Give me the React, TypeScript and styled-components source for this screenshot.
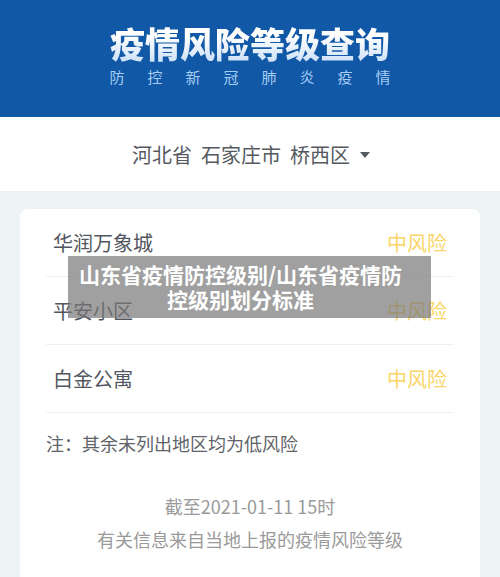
import React from "react"
import styled, { createGlobalStyle } from "styled-components"

const GlobalStyle = createGlobalStyle`
	body {
		margin: 0;
		background: #edf2f5;
		font-family: "Noto Sans CJK SC", "Noto Sans", sans-serif;
	}
`

const areas = [
	{ name: "华润万象城", level: "中风险" },
	{ name: "平安小区", level: "中风险" },
	{ name: "白金公寓", level: "中风险" }
]

const App = () => {
	return (
		<Page>
			<GlobalStyle />
			<Header>
				<Title>疫情风险等级查询</Title>
				<Subtitle>防控新冠肺炎疫情</Subtitle>
			</Header>
			<LocationBar>
				<span>河北省</span>
				<span>石家庄市</span>
				<span>桥西区</span>
				<Caret />
			</LocationBar>
			<Content>
				<Card>
					{areas.map((a) => (
						<Row key={a.name}>
							<AreaName>{a.name}</AreaName>
							<Level>{a.level}</Level>
						</Row>
					))}
					<Note>注：其余未列出地区均为低风险</Note>
					<Footer>
						<p>截至2021-01-11 15时</p>
						<p>有关信息来自当地上报的疫情风险等级</p>
					</Footer>
				</Card>
				<Banner>
					山东省疫情防控级别/山东省疫情防
					<br />
					控级别划分标准
				</Banner>
			</Content>
		</Page>
	)
}

const Page = styled.div`
	width: 500px;
	height: 577px;
	overflow: hidden;
	background: #edf2f5;
`

const Header = styled.header`
	background: #1158a6;
	height: 117px;
	display: flex;
	flex-direction: column;
	align-items: center;
	padding-top: 22px;
	box-sizing: border-box;
`

const Title = styled.h1`
	margin: 0;
	font-size: 35px;
	line-height: 42px;
	font-weight: 900;
	letter-spacing: 0;
	background: linear-gradient(180deg, #ffffff 35%, #c9def7 100%);
	-webkit-background-clip: text;
	background-clip: text;
	color: transparent;
`

const Subtitle = styled.div`
	margin-top: 3px;
	font-size: 15px;
	line-height: 20px;
	color: #a6cdf4;
	letter-spacing: 23px;
	margin-right: -23px;
`

const LocationBar = styled.div`
	background: #fff;
	height: 74px;
	display: flex;
	align-items: center;
	justify-content: center;
	gap: 9px;
	font-size: 20px;
	color: #555960;
	padding-left: 2px;
`

const Caret = styled.span`
	width: 0;
	height: 0;
	border-left: 5.5px solid transparent;
	border-right: 5.5px solid transparent;
	border-top: 6px solid #555960;
	margin-left: 1px;
	margin-top: 1px;
`

const Content = styled.div`
	position: relative;
	padding: 18px 20px 0;
`

const Card = styled.div`
	background: #fff;
	border-radius: 8px;
	padding: 0 26px 30px;
`

const Row = styled.div`
	height: 67px;
	display: flex;
	align-items: center;
	justify-content: space-between;
	padding: 0 7px;
	border-bottom: 1px solid #eef0f2;
	font-size: 20px;
`

const AreaName = styled.span`
	color: #52565e;
`

const Level = styled.span`
	color: #fad567;
`

const Note = styled.div`
	padding-top: 18px;
	font-size: 18px;
	line-height: 24px;
	color: #5f636a;
`

const Footer = styled.div`
	margin-top: 35px;
	text-align: center;
	font-size: 18px;
	color: #9a9a9a;
	p {
		margin: 0;
		line-height: 33px;
	}
`

const Banner = styled.div`
	position: absolute;
	left: 68px;
	top: 65px;
	width: 363px;
	height: 62px;
	background: rgba(120, 120, 120, 0.7);
	color: #fff;
	font-weight: 700;
	font-size: 21px;
	line-height: 25px;
	text-align: center;
	display: flex;
	align-items: center;
	justify-content: center;
	padding-right: 18px;
	box-sizing: border-box;
	white-space: nowrap;
`

export default App
